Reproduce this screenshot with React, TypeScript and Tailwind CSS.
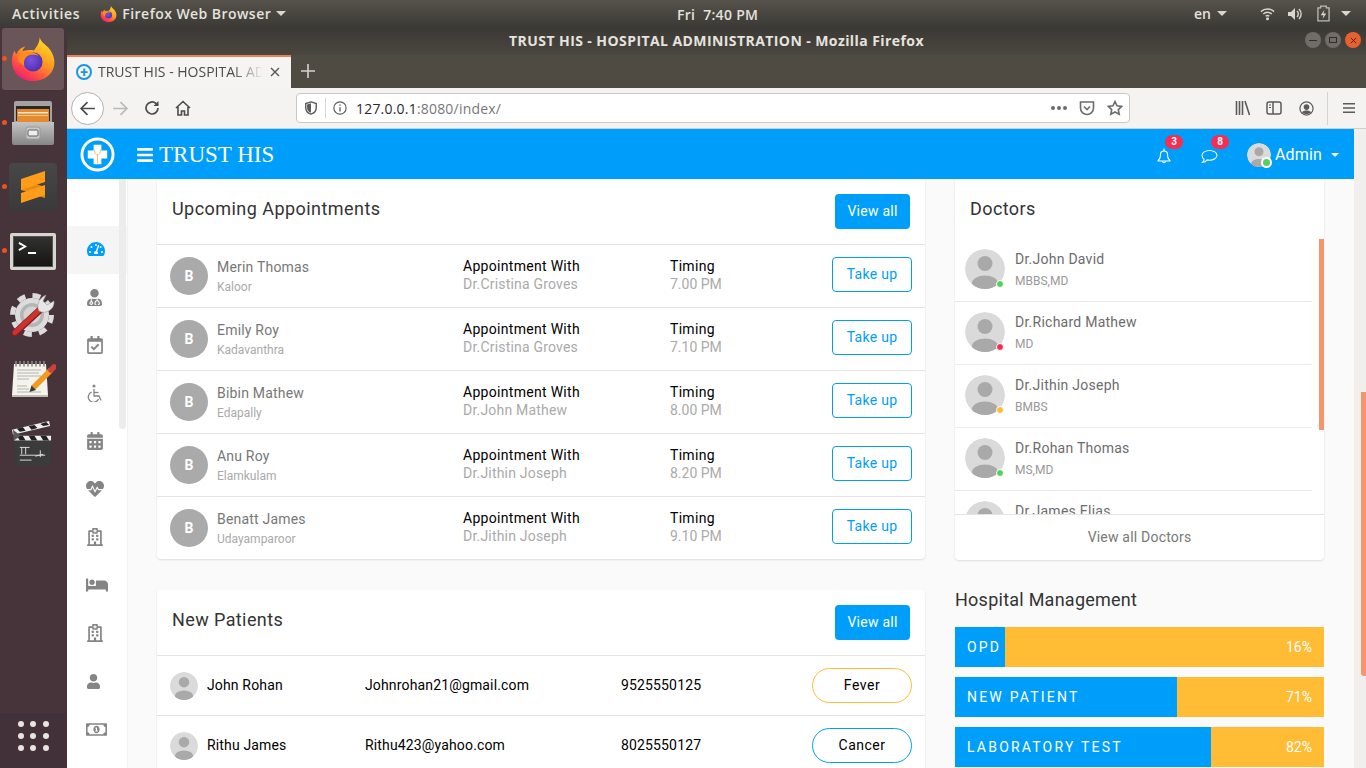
import {
  FaTachometerAlt,
  FaUserMd,
  FaRegCalendarCheck,
  FaCalendarAlt,
  FaHeartbeat,
  FaRegHospital,
  FaBed,
  FaUser,
  FaRegMoneyBillAlt,
  FaBars,
} from "react-icons/fa";
import { ReactNode } from "react";

const appointments = [
  { name: "Merin Thomas", place: "Kaloor", doctor: "Dr.Cristina Groves", time: "7.00 PM" },
  { name: "Emily Roy", place: "Kadavanthra", doctor: "Dr.Cristina Groves", time: "7.10 PM" },
  { name: "Bibin Mathew", place: "Edapally", doctor: "Dr.John Mathew", time: "8.00 PM" },
  { name: "Anu Roy", place: "Elamkulam", doctor: "Dr.Jithin Joseph", time: "8.20 PM" },
  { name: "Benatt James", place: "Udayamparoor", doctor: "Dr.Jithin Joseph", time: "9.10 PM" },
];

const doctors = [
  { name: "Dr.John David", degree: "MBBS,MD", dot: "bg-[#55ce63]" },
  { name: "Dr.Richard Mathew", degree: "MD", dot: "bg-[#f62d51]" },
  { name: "Dr.Jithin Joseph", degree: "BMBS", dot: "bg-[#ffbc34]" },
  { name: "Dr.Rohan Thomas", degree: "MS,MD", dot: "bg-[#55ce63]" },
  { name: "Dr.James Elias", degree: "MD", dot: "bg-[#55ce63]" },
];

function WheelchairIcon({ className }: { className?: string }) {
  return (
    <svg viewBox="0 0 18 18" fill="none" stroke="currentColor" strokeWidth="1.3" className={className}>
      <circle cx="8" cy="2" r="1.5" fill="currentColor" stroke="none" />
      <path d="M8 5v7h5l2 4.500" />
      <path d="M8 8.500h4.500" />
      <path d="M5.800 8a5.300 5.300 0 1 0 6.700 7" />
    </svg>
  );
}

const sideIcons = [
  { Icon: FaUserMd, size: "text-[17px]" },
  { Icon: FaRegCalendarCheck, size: "text-[18px]" },
  { Icon: WheelchairIcon, size: "w-[18px] h-[18px]" },
  { Icon: FaCalendarAlt, size: "text-[18px]" },
  { Icon: FaHeartbeat, size: "text-[18px]" },
  { Icon: FaRegHospital, size: "text-[18px]" },
  { Icon: FaBed, size: "text-[22px]" },
  { Icon: FaRegHospital, size: "text-[18px]" },
  { Icon: FaUser, size: "text-[15px]" },
  { Icon: FaRegMoneyBillAlt, size: "text-[21px]" },
];

function Avatar({ size }: { size: string }) {
  return (
    <svg viewBox="0 0 40 40" className={`${size} shrink-0 rounded-full`}>
      <circle cx="20" cy="20" r="20" fill="#dadada" />
      <circle cx="20" cy="14.5" r="7.5" fill="#a9a9a9" />
      <ellipse cx="20" cy="34" rx="13" ry="7.5" fill="#a9a9a9" />
    </svg>
  );
}

function FirefoxLogo({ size }: { size: string }) {
  return (
    <svg viewBox="0 0 48 48" className={size}>
      <defs>
        <linearGradient id="ffa" x1="0.8" y1="0" x2="0.2" y2="1">
          <stop offset="0" stopColor="#ffe226" />
          <stop offset="0.45" stopColor="#ff9a1f" />
          <stop offset="0.8" stopColor="#ff3f4c" />
          <stop offset="1" stopColor="#e31587" />
        </linearGradient>
        <radialGradient id="ffb" cx="0.4" cy="0.4" r="0.7">
          <stop offset="0" stopColor="#7a52e0" />
          <stop offset="1" stopColor="#4a2ca8" />
        </radialGradient>
      </defs>
      <path d="M31 1c1 5 5 7 9 11 6 7 7 14 6 19-2 10-11 16-22 16C11 47 2 38 2 26c0-4 1-8 3-11 0 2 1 3 2 4 1-4 5-7 9-8-2 2-3 4-3 5 3-1 8-2 12-1 3-4 6-8 6-14z" fill="url(#ffa)" />
      <circle cx="24" cy="27" r="10" fill="url(#ffb)" />
      <path d="M8 22c3-5 8-6 11-5 4-1 9 1 11 4-4-2-9-2-12 0-3 2-4 6-3 10-4-2-7-5-7-9z" fill="#ff8a1f" />
    </svg>
  );
}

function HospitalLogo() {
  return (
    <svg viewBox="0 0 36 36" className="w-[35px] h-[35px]">
      <circle cx="18" cy="18" r="16" fill="#009efb" stroke="#fff" strokeWidth="3" />
      <path d="M14 8h8v6h6v8h-6v6h-8v-6H8v-8h6z" fill="#fff" />
      <path d="M15 13c0 4 1 5 3 5s3-1 3-5M18 18v9" fill="none" stroke="#e5b64a" strokeWidth="0.8" />
    </svg>
  );
}

function DockItem({ children, running, active }: { children: ReactNode; running?: boolean; active?: boolean }) {
  return (
    <div className="relative h-[64px] flex items-center justify-center pr-[2px]">
      {running && <span className="absolute left-[2px] top-[29px] w-[5px] h-[5px] rounded-full bg-[#e95420]" />}
      <div className={`w-[62px] h-[62px] rounded-[3px] flex items-center justify-center ${active ? "bg-[#6a5558]" : ""}`}>
        {children}
      </div>
    </div>
  );
}

function Dock() {
  return (
    <div className="w-[67px] shrink-0 bg-[#47333a] flex flex-col">
      <DockItem running active>
        <FirefoxLogo size="w-[46px] h-[48px]" />
      </DockItem>
      <DockItem running>
        <svg viewBox="0 0 42 44" className="w-[42px] h-[44px]">
          <defs>
            <linearGradient id="cab" x1="0" y1="0" x2="0" y2="1">
              <stop offset="0" stopColor="#c4c4c4" />
              <stop offset="1" stopColor="#868686" />
            </linearGradient>
          </defs>
          <path d="M2 2q0-2 2-2h34q2 0 2 2v22H2z" fill="#a3a3a3" />
          <path d="M4 5h34v15H4z" fill="#2b2825" />
          <path d="M5 8h32v14H5z" fill="#e58a2e" />
          <path d="M6 11h30v1.500H6z" fill="#fbe6c8" />
          <path d="M6 14h30v1H6z" fill="#f5c78c" />
          <path d="M0 21h42v21q0 2-2 2H2q-2 0-2-2z" fill="url(#cab)" />
          <rect x="14" y="26" width="14" height="12" rx="2" fill="#c9c9c9" stroke="#9a9a9a" />
          <rect x="16" y="29" width="10" height="6" rx="1" fill="#eeeeee" stroke="#5f5f5f" />
        </svg>
      </DockItem>
      <DockItem running>
        <div className="w-[48px] h-[48px] rounded-[4px] bg-gradient-to-b from-[#474747] to-[#3a3a3a] flex items-center justify-center">
          <svg viewBox="0 0 24 32" className="w-[24px] h-[32px]">
            <path d="M0 8l24 8v11L0 19z" fill="#e88b12" />
            <path d="M0 8l24-8v11L0 19z" fill="#ff9c1a" />
            <path d="M0 22l24-8v10L0 32z" fill="#ff9c1a" />
          </svg>
        </div>
      </DockItem>
      <DockItem running>
        <div className="w-[46px] h-[37px] rounded-[2px] bg-gradient-to-b from-[#33332f] to-[#141414] border-[3px] border-[#d6d6d1] outline outline-1 -outline-offset-4 outline-[#555] flex items-start gap-[1px] pl-[5px] pt-[6px]">
          <svg viewBox="0 0 10 10" className="w-[9px] h-[9px]">
            <path d="M1 1l7 4-7 4" fill="none" stroke="#fff" strokeWidth="2" />
          </svg>
          <span className="block mt-[10px] w-[8px] h-[2px] bg-white" />
        </div>
      </DockItem>
      <DockItem>
        <svg viewBox="0 0 46 46" className="w-[46px] h-[46px]">
          <circle cx="22" cy="23" r="17" fill="#dcdcdc" />
          <circle cx="22" cy="23" r="19.500" fill="none" stroke="#dcdcdc" strokeWidth="5" strokeDasharray="8 7.300" />
          <circle cx="22" cy="23" r="12" fill="#b5b5b5" />
          <circle cx="22" cy="23" r="8.500" fill="#d4d4d4" />
          <path d="M5 41l26-24" stroke="#8e1c1c" strokeWidth="7" strokeLinecap="round" />
          <path d="M5 40.500l26-24" stroke="#cc3330" strokeWidth="5" strokeLinecap="round" />
          <path d="M29 19c-3-6 0-13 7-16l-3 6 4 4 7-4c1 8-8 14-15 10z" fill="#e6e6e6" stroke="#9a9a9a" strokeWidth="0.6" />
        </svg>
      </DockItem>
      <DockItem>
        <svg viewBox="0 0 46 37" className="w-[46px] h-[37px]">
          <path d="M4 3h32l2 31H2z" fill="#f4f3ec" />
          <path d="M2 34h36v2H2z" fill="#bdbdb5" />
          <path d="M6 0v5M10 0v5M14 0v5M18 0v5M22 0v5M26 0v5M30 0v5M34 0v5" stroke="#8a8a8a" strokeWidth="1.6" strokeLinecap="round" />
          <path d="M7 9h24M7 12h22M7 15h24M7 18h12M7 25h10M7 28h12M7 31h24" stroke="#b4b4b4" strokeWidth="1" />
          <path d="M23 27l18-18" stroke="#f39a1e" strokeWidth="5.500" />
          <path d="M41 9l3-3" stroke="#d0403a" strokeWidth="5.500" strokeLinecap="round" />
          <path d="M19.500 31l2-6.500 4.500 4.500z" fill="#3a3a3a" />
        </svg>
      </DockItem>
      <DockItem>
        <svg viewBox="0 0 42 46" className="w-[41px] h-[45px]">
          <rect x="2" y="20" width="38" height="26" rx="1" fill="#3b3b3b" />
          <path d="M2 15h38v5H2z" fill="#eee" />
          <path d="M5 15h6l3 5H8zM17 15h6l3 5h-6zM29 15h6l3 5h-6z" fill="#222" />
          <path d="M0 9l38-9 1 5L1 14z" fill="#eee" />
          <path d="M5 8l6-2 3 4-6 1zM17 5l6-1 3 3-6 2zM29 3l6-2 3 3-6 1z" fill="#222" />
          <path d="M1 9l8 6-7 5z" fill="#5a5a5a" />
          <path d="M8 27h10M10 27v7M14 27v7M8 35h26M24 36l8-2M29 30v7M8 40h12" stroke="#ddd" strokeWidth="1" />
        </svg>
      </DockItem>
      <div className="flex-1" />
      <div className="h-[55px] bg-[#423138] grid grid-cols-3 gap-[6px] px-[18px] pt-[8px] content-start">
        {Array.from({ length: 9 }).map((_, i) => (
          <span key={i} className="w-[6px] h-[6px] rounded-full bg-[#e8e4e2]" />
        ))}
      </div>
    </div>
  );
}

function TopBar() {
  return (
    <div className="h-[27px] shrink-0 bg-gradient-to-b from-[#56534c] to-[#3c3a35] flex items-center text-[#e4e2dd] text-[14px] font-semibold [font-family:'Open_Sans',sans-serif] relative">
      <span className="ml-[12px] tracking-[0.7px]">Activities</span>
      <FirefoxLogo size="ml-[20px] w-[17px] h-[18px]" />
      <span className="ml-[5px] tracking-[0.45px]">Firefox Web Browser</span>
      <span className="ml-[5px] w-0 h-0 border-x-[5px] border-x-transparent border-t-[5px] border-t-[#d8d6d1]" />
      <span className="absolute left-[677px] top-[4px] tracking-[0.3px]">Fri&nbsp; 7:40 PM</span>
      <div className="ml-auto flex items-center">
        <span>en</span>
        <span className="ml-[6px] w-0 h-0 border-x-[5px] border-x-transparent border-t-[5px] border-t-[#d8d6d1]" />
        <svg viewBox="0 0 16 16" className="ml-[33px] w-[15px] h-[15px]">
          <path d="M1 6a10 10 0 0 1 14 0M3.500 8.500a6.500 6.500 0 0 1 9 0M6 11a3 3 0 0 1 4 0" fill="none" stroke="#d8d6d1" strokeWidth="1.5" />
          <circle cx="8" cy="13.5" r="1.6" fill="#d8d6d1" />
        </svg>
        <svg viewBox="0 0 16 16" className="ml-[12px] w-[16px] h-[16px]">
          <path d="M1 6h3l4-4v12l-4-4H1z" fill="#d8d6d1" />
          <path d="M10 5a4 4 0 0 1 0 6M12 3a7 7 0 0 1 0 10" fill="none" stroke="#d8d6d1" strokeWidth="1.4" />
        </svg>
        <svg viewBox="0 0 14 18" className="ml-[14px] w-[13px] h-[17px]">
          <path d="M4 1h6v2h3v14H1V3h3z" fill="none" stroke="#bdbbb6" strokeWidth="1.4" />
          <path d="M8 5l-4 6h3l-1 4 4-6H7z" fill="#d8d6d1" />
        </svg>
        <span className="ml-[11px] mr-[15px] w-0 h-0 border-x-[5px] border-x-transparent border-t-[5px] border-t-[#d8d6d1]" />
      </div>
    </div>
  );
}

function WindowButton({ tone, children }: { tone: string; children: ReactNode }) {
  return (
    <span className={`w-[16px] h-[16px] rounded-full flex items-center justify-center ${tone}`}>{children}</span>
  );
}

function TitleBar() {
  return (
    <div className="h-[28px] shrink-0 bg-gradient-to-b from-[#3b3935] to-[#4a4740] flex items-center justify-center relative pb-[2px]">
      <span className="text-[14px] font-bold tracking-[0.42px] text-[#e6e3de] [font-family:'Open_Sans',sans-serif]">
        TRUST HIS - HOSPITAL ADMINISTRATION - Mozilla Firefox
      </span>
      <div className="absolute right-[5px] top-[5px] flex gap-[4px]">
        <WindowButton tone="bg-[#6f6d67]">
          <span className="w-[8px] h-[1px] bg-[#2f2e2b]" />
        </WindowButton>
        <WindowButton tone="bg-[#6f6d67]">
          <span className="w-[8px] h-[6px] border border-[#2f2e2b]" />
        </WindowButton>
        <WindowButton tone="bg-[#e9602f]">
          <svg viewBox="0 0 8 8" className="w-[7px] h-[7px]">
            <path d="M1 1l6 6M7 1l-6 6" stroke="#3a1c10" strokeWidth="1" />
          </svg>
        </WindowButton>
      </div>
    </div>
  );
}

function TabBar() {
  return (
    <div className="h-[33px] shrink-0 bg-[#4f4b43] flex items-end">
      <div className="w-[224px] h-[33px] bg-[#f5f4f2] border-t-2 border-[#ef7f56] flex items-center pl-[9px] pb-[2px]">
        <span className="w-[16px] h-[16px] rounded-full border-2 border-[#1b96e3] flex items-center justify-center shrink-0">
          <span className="text-[#1b96e3] text-[14px] leading-none font-bold">+</span>
        </span>
        <div className="ml-[6px] w-[165px] overflow-hidden whitespace-nowrap text-[14px] text-[#4a4a4f] [font-family:'Open_Sans',sans-serif] [mask-image:linear-gradient(to_right,#000_82%,transparent)]">
          TRUST HIS - HOSPITAL ADMINISTRATION
        </div>
        <svg viewBox="0 0 10 10" className="ml-[7px] w-[10px] h-[10px]">
          <path d="M1 1l8 8M9 1l-8 8" stroke="#55555a" strokeWidth="1.4" />
        </svg>
      </div>
      <svg viewBox="0 0 14 14" className="ml-[10px] mb-[10px] w-[14px] h-[14px]">
        <path d="M7 0v14M0 7h14" stroke="#d5d3ce" strokeWidth="1.6" />
      </svg>
    </div>
  );
}

function NavBar() {
  return (
    <div className="h-[41px] shrink-0 bg-[#f4f3f1] border-b border-[#cfcecb] flex items-center">
      <span className="ml-[4px] w-[33px] h-[33px] rounded-full bg-white border border-[#b1b1b1] flex items-center justify-center">
        <svg viewBox="0 0 16 16" className="w-[17px] h-[17px]">
          <path d="M8 2L2 8l6 6M2.500 8H15" fill="none" stroke="#4c4c4c" strokeWidth="1.6" />
        </svg>
      </span>
      <svg viewBox="0 0 16 16" className="ml-[8px] w-[17px] h-[17px]">
        <path d="M8 2l6 6-6 6M13.500 8H1" fill="none" stroke="#b9b9b9" strokeWidth="1.6" />
      </svg>
      <svg viewBox="0 0 16 16" className="ml-[15px] w-[16px] h-[16px]">
        <path d="M14 8a6 6 0 1 1-2-4.500L14 5" fill="none" stroke="#4c4c4c" strokeWidth="1.7" />
        <path d="M14.500 1v5h-5z" fill="#4c4c4c" />
      </svg>
      <svg viewBox="0 0 16 16" className="ml-[15px] w-[16px] h-[16px]">
        <path d="M1 8l7-6.500L15 8M3 7v8h3.500v-4h3v4H13V7" fill="none" stroke="#4c4c4c" strokeWidth="1.6" />
      </svg>
      <div className="ml-[105px] w-[834px] h-[30px] bg-white border border-[#c9c8c5] rounded-[4px] flex items-center text-[14px] tracking-[0.2px] [font-family:'Open_Sans',sans-serif]">
        <svg viewBox="0 0 16 16" className="ml-[7px] w-[14px] h-[14px]">
          <path d="M8 1l6 2v5c0 4-3 6-6 7-3-1-6-3-6-7V3z" fill="none" stroke="#5b5b5b" strokeWidth="1.6" />
          <path d="M8 2.500v11c-2.500-1-4.500-2.500-4.500-5.500V4z" fill="#5b5b5b" />
        </svg>
        <span className="ml-[7px] w-[1px] h-[20px] bg-[#d8d8d6]" />
        <svg viewBox="0 0 16 16" className="ml-[7px] w-[14px] h-[14px]">
          <circle cx="8" cy="8" r="7" fill="none" stroke="#5b5b5b" strokeWidth="1.3" />
          <path d="M8 7v5M8 4v1.500" stroke="#5b5b5b" strokeWidth="1.5" />
        </svg>
        <span className="ml-[9px] text-[#2a2a2e]">127.0.0.1</span>
        <span className="text-[#77777b]">:8080/index/</span>
        <div className="ml-auto flex items-center">
          <span className="flex gap-[2px]">
            <span className="w-[4px] h-[4px] rounded-full bg-[#6c6c6c]" />
            <span className="w-[4px] h-[4px] rounded-full bg-[#6c6c6c]" />
            <span className="w-[4px] h-[4px] rounded-full bg-[#6c6c6c]" />
          </span>
          <svg viewBox="0 0 16 16" className="ml-[12px] w-[16px] h-[16px]">
            <path d="M1.500 2h13v6a6.500 6.500 0 0 1-13 0z" fill="none" stroke="#6c6c6c" strokeWidth="1.6" />
            <path d="M5 6.500l3 3 3-3" fill="none" stroke="#6c6c6c" strokeWidth="1.6" />
          </svg>
          <svg viewBox="0 0 16 16" className="ml-[12px] mr-[6px] w-[16px] h-[16px]">
            <path d="M8 1.500l2 4.300 4.700.6-3.400 3.200.9 4.700L8 12l-4.200 2.300.9-4.700L1.300 6.400 6 5.800z" fill="none" stroke="#6c6c6c" strokeWidth="1.6" />
          </svg>
        </div>
      </div>
      <div className="ml-[105px] flex items-center">
        <svg viewBox="0 0 16 16" className="w-[16px] h-[16px]">
          <path d="M1.500 1v14M4.500 1v14M7.500 1v14M10 1l4.500 14" fill="none" stroke="#5b5b5b" strokeWidth="1.6" />
        </svg>
        <svg viewBox="0 0 16 16" className="ml-[15px] w-[16px] h-[16px]">
          <rect x="1" y="2" width="14" height="12" rx="2" fill="none" stroke="#5b5b5b" strokeWidth="1.5" />
          <path d="M7 2v12" stroke="#5b5b5b" strokeWidth="1.5" />
          <path d="M3 5h2M3 7.500h2" stroke="#5b5b5b" strokeWidth="1.200" />
        </svg>
        <svg viewBox="0 0 16 16" className="ml-[17px] w-[15px] h-[15px]">
          <circle cx="8" cy="8" r="7" fill="none" stroke="#5b5b5b" strokeWidth="1.300" />
          <circle cx="8" cy="6.500" r="3" fill="#5b5b5b" />
          <path d="M3 12c2-2.500 8-2.500 10 0-2 2.500-8 2.500-10 0z" fill="#5b5b5b" />
        </svg>
        <span className="ml-[13px] w-[1px] h-[33px] bg-[#d5d4d1]" />
        <svg viewBox="0 0 14 12" className="ml-[15px] w-[12px] h-[12px]">
          <path d="M0 1h14M0 6h14M0 11h14" stroke="#5b5b5b" strokeWidth="1.700" />
        </svg>
      </div>
    </div>
  );
}

function AppHeader() {
  return (
    <div className="h-[50px] shrink-0 bg-[#009efb] flex items-center text-white pt-[1px]">
      <div className="ml-[13px]">
        <HospitalLogo />
      </div>
      <FaBars className="ml-[21px] text-[18px]" />
      <span className="ml-[5px] mt-[1px] text-[23px] [font-family:'Liberation_Serif',serif]">TRUST HIS</span>
      <div className="ml-auto flex items-center">
        <div className="relative mt-[2px]">
          <svg viewBox="0 0 16 16" className="w-[16px] h-[17px]">
            <path d="M3 12c1-1 1.500-2 1.500-5a3.500 3.500 0 0 1 7 0c0 3 .5 4 1.500 5 .6.6 1 1 1 1.500H2c0-.5.4-.9 1-1.500zM6.500 14c0 1.500 3 1.500 3 0M8 1v2" fill="none" stroke="#fff" strokeWidth="1.1" />
          </svg>
          <span className="absolute -top-[12px] left-[9px] w-[18px] h-[14px] rounded-full bg-[#f62d51] text-[10px] font-bold leading-[14px] text-center">3</span>
        </div>
        <div className="relative ml-[29px] mt-[4px]">
          <svg viewBox="0 0 18 16" className="w-[17px] h-[15px]">
            <path d="M9 1.500c4.400 0 8 2.300 8 5.200s-3.600 5.200-8 5.200c-.9 0-1.700-.1-2.500-.3C5.500 13 4 14.200 1.500 14.300c1-1 1.700-2 1.800-3.300C2 10 1 8.500 1 6.700 1 3.800 4.600 1.500 9 1.500z" fill="none" stroke="#fff" strokeWidth="1.1" />
          </svg>
          <span className="absolute -top-[14px] left-[10px] w-[18px] h-[14px] rounded-full bg-[#f62d51] text-[10px] font-bold leading-[14px] text-center">8</span>
        </div>
        <div className="relative ml-[29px]">
          <Avatar size="w-[24px] h-[24px]" />
          <span className="absolute left-[14px] top-[14px] w-[11px] h-[11px] rounded-full bg-[#55ce63] border-2 border-white" />
        </div>
        <span className="ml-[4px] text-[16px] [font-family:Roboto,sans-serif] tracking-[0.15px]">Admin</span>
        <span className="ml-[9px] mr-[15px] w-0 h-0 border-x-[4px] border-x-transparent border-t-[4px] border-t-white" />
      </div>
    </div>
  );
}

function Sidebar() {
  return (
    <div className="w-[60px] shrink-0 bg-white relative overflow-hidden shadow-[1px_0_1px_rgba(0,0,0,0.03)]">
      <div className="pt-[47px]">
        <div className="h-[48px] bg-[#f5f5f5] flex items-center pl-[20px] pb-[2px]">
          <FaTachometerAlt className="text-[18px] text-[#009efb]" />
        </div>
        {sideIcons.map(({ Icon, size }, i) => (
          <div key={i} className="h-[48px] flex items-center pl-[19px] pb-[2px]">
            <Icon className={`${size} text-[#848484]`} />
          </div>
        ))}
      </div>
      <span className="absolute left-[52px] top-0 w-[7px] h-[250px] rounded-b-[4px] bg-[#ececec]" />
    </div>
  );
}

function ViewAll() {
  return (
    <button className="w-[75px] h-[35px] rounded-[4px] bg-[#009efb] text-white text-[14px] tracking-[0.25px]">View all</button>
  );
}

function Appointments() {
  return (
    <div className="bg-white rounded-b-[4px] shadow-[0_1px_2px_rgba(0,0,0,0.12)]">
      <div className="h-[65px] flex items-start justify-between px-[15px] pt-[15px]">
        <h4 className="text-[18px] leading-[30px] tracking-[0.45px] text-[#333]">Upcoming Appointments</h4>
        <ViewAll />
      </div>
      {appointments.map((a) => (
        <div key={a.name} className="h-[63px] border-t border-[#e3e4e8] flex items-center px-[13px]">
          <div className="w-[38px] h-[38px] rounded-full bg-[#aaaaaa] flex items-center justify-center text-white text-[14px] font-bold shrink-0">B</div>
          <div className="ml-[9px] w-[246px]">
            <div className="text-[14px] leading-[20px] tracking-[0.2px] text-[#777]">{a.name}</div>
            <div className="text-[12px] leading-[16px] mt-[2px] text-[#aaa]">{a.place}</div>
          </div>
          <div className="w-[207px] -mt-[2px] text-[14px] leading-[18px] tracking-[0.3px]">
            <div className="text-black">Appointment With</div>
            <div className="text-[#aaa] tracking-[0.2px]">{a.doctor}</div>
          </div>
          <div className="flex-1 -mt-[2px] text-[14px] leading-[18px]">
            <div className="text-black tracking-[0.3px]">Timing</div>
            <div className="text-[#aaa]">{a.time}</div>
          </div>
          <button className="w-[80px] h-[35px] -mt-[4px] rounded-[4px] border border-[#009efb] text-[#009efb] text-[14px] tracking-[0.3px]">Take up</button>
        </div>
      ))}
    </div>
  );
}

function NewPatients() {
  const rows = [
    { name: "John Rohan", email: "Johnrohan21@gmail.com", phone: "9525550125", tag: "Fever", border: "border-[#ffbc34]" },
    { name: "Rithu James", email: "Rithu423@yahoo.com", phone: "8025550127", tag: "Cancer", border: "border-[#009efb]" },
  ];
  return (
    <div className="mt-[31px] bg-white rounded-t-[4px] shadow-[0_1px_2px_rgba(0,0,0,0.12)]">
      <div className="h-[65px] flex items-start justify-between px-[15px] pt-[15px]">
        <h4 className="text-[18px] leading-[30px] tracking-[0.4px] text-[#333]">New Patients</h4>
        <ViewAll />
      </div>
      {rows.map((r) => (
        <div key={r.name} className="h-[60px] border-t border-[#e3e4e8] flex items-center px-[13px] text-[14px] tracking-[0.15px] text-black">
          <Avatar size="w-[28px] h-[28px]" />
          <span className="ml-[9px] w-[158px]">{r.name}</span>
          <span className="w-[256px]">{r.email}</span>
          <span className="flex-1">{r.phone}</span>
          <button className={`w-[100px] h-[35px] rounded-full border tracking-[0.5px] ${r.border}`}>{r.tag}</button>
        </div>
      ))}
    </div>
  );
}

function Doctors() {
  return (
    <div className="bg-white rounded-b-[4px] shadow-[0_1px_2px_rgba(0,0,0,0.12)]">
      <div className="h-[60px] pl-[15px] pt-[15px]">
        <h4 className="text-[18px] leading-[30px] tracking-[0.4px] text-[#333]">Doctors</h4>
      </div>
      <div className="relative h-[275px] overflow-hidden">
        <div className="w-[357px]">
          {doctors.map((d) => (
            <div key={d.name} className="h-[63px] border-b border-[#eaeaea] flex items-center pl-[10px] pb-[3px]">
              <div className="relative">
                <Avatar size="w-[40px] h-[40px]" />
                <span className={`absolute right-[1px] bottom-[1px] w-[8px] h-[8px] rounded-full border border-white ${d.dot}`} />
              </div>
              <div className="ml-[10px] mt-[1px]">
                <div className="text-[14px] leading-[20px] tracking-[0.25px] text-[#6c6c6c]">{d.name}</div>
                <div className="text-[12px] leading-[16px] mt-[4px] text-[#999]">{d.degree}</div>
              </div>
            </div>
          ))}
        </div>
        <span className="absolute right-0 top-0 w-[5px] h-[191px] bg-[#f4956c]" />
      </div>
      <div className="h-[46px] border-t border-[#e3e4e8] flex items-center justify-center text-[14px] tracking-[0.2px] text-[#777]">
        View all Doctors
      </div>
    </div>
  );
}

function HospitalBars() {
  const bars = [
    { label: "OPD", value: "16%", width: 50 },
    { label: "NEW PATIENT", value: "71%", width: 222 },
    { label: "LABORATORY TEST", value: "82%", width: 256 },
  ];
  return (
    <div className="mt-[27px]">
      <h4 className="text-[18px] leading-[26px] tracking-[0.25px] text-[#333]">Hospital Management</h4>
      <div className="mt-[14px] flex flex-col gap-[10px]">
        {bars.map((b) => (
          <div key={b.label} className="relative h-[40px] bg-[#ffbc34] text-white text-[14px] leading-[40px] overflow-hidden">
            <div className="absolute left-0 top-0 h-full bg-[#009efb]" style={{ width: b.width }} />
            <span className="absolute left-[12px] tracking-[2.2px] whitespace-nowrap">{b.label}</span>
            <span className="absolute right-[12px]">{b.value}</span>
          </div>
        ))}
      </div>
    </div>
  );
}

export default function App() {
  return (
    <div className="w-[1366px] h-[768px] overflow-hidden flex flex-col [font-family:Roboto,sans-serif]">
      <TopBar />
      <div className="flex flex-1 min-h-0">
        <Dock />
        <div className="flex-1 min-w-0 flex flex-col">
          <TitleBar />
          <TabBar />
          <NavBar />
          <div className="flex flex-1 min-h-0">
            <div className="flex-1 min-w-0 flex flex-col bg-[#fafafa]">
              <AppHeader />
              <div className="flex flex-1 min-h-0">
                <Sidebar />
                <div className="flex-1 overflow-hidden flex gap-[30px] pl-[30px]">
                  <div className="w-[768px] shrink-0">
                    <Appointments />
                    <NewPatients />
                  </div>
                  <div className="w-[369px] shrink-0">
                    <Doctors />
                    <HospitalBars />
                  </div>
                </div>
              </div>
            </div>
            <div className="w-[12px] shrink-0 bg-[#f0efed] pt-[263px] flex flex-col items-end">
              <div className="w-[5px] h-[284px] bg-[#f4956c] rounded-bl-[3px]" />
            </div>
          </div>
        </div>
      </div>
    </div>
  );
}
